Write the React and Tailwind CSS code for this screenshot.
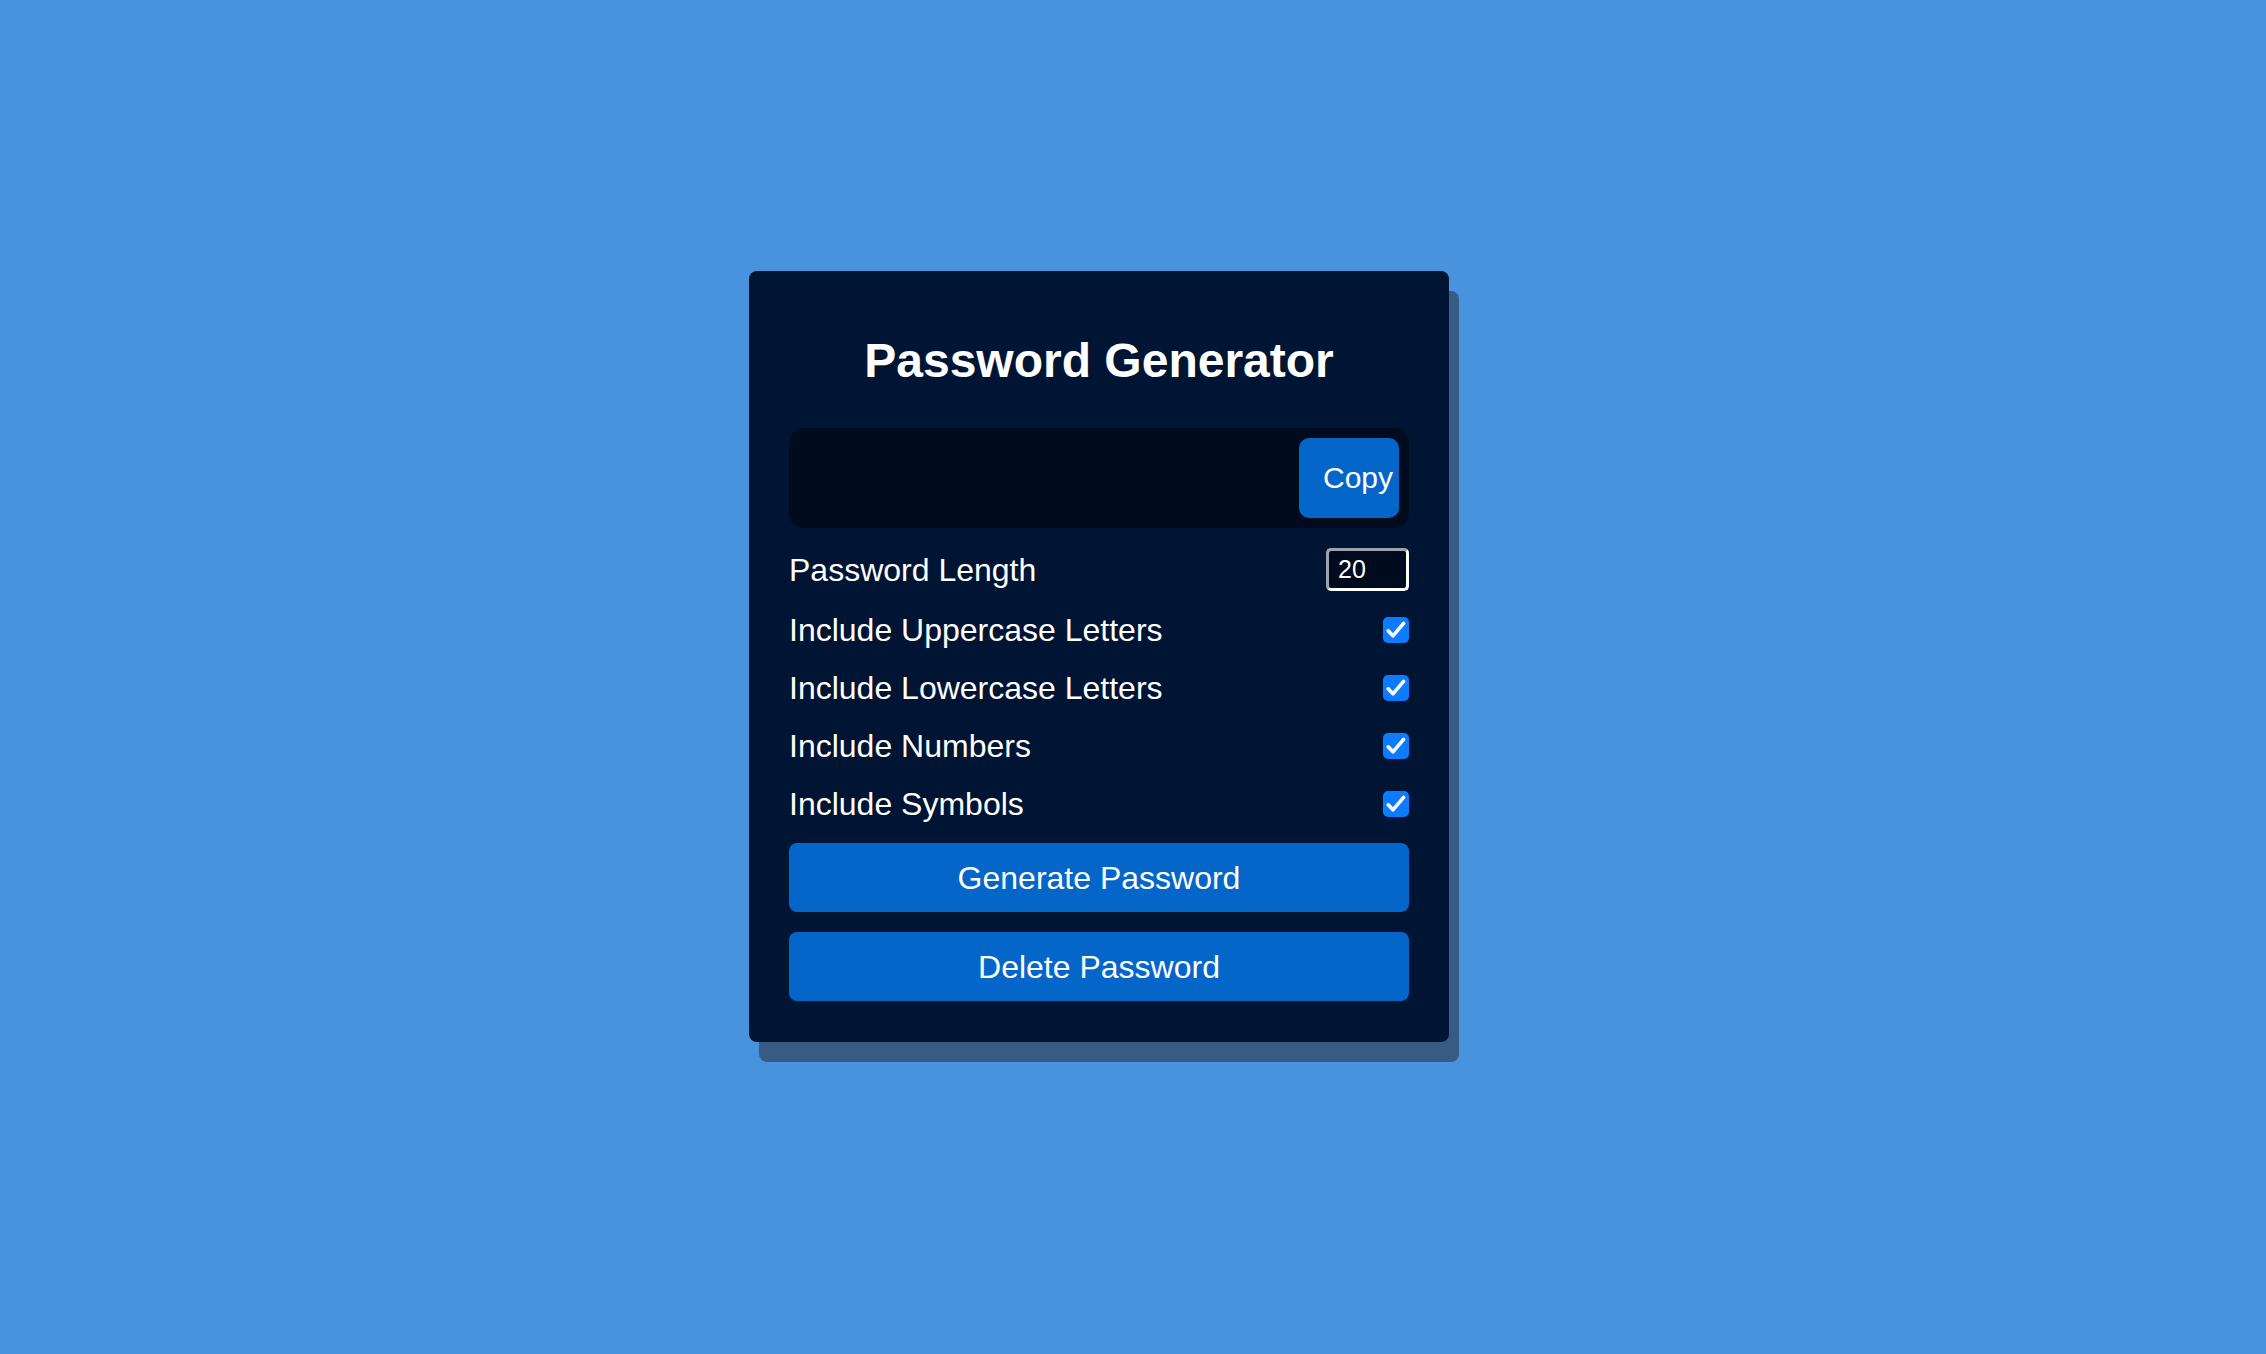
import React from "react";

function Check() {
  return (
    <div className="w-[26px] h-[26px] rounded-[5px] bg-[#0b7bff] flex items-center justify-center">
      <svg width="26" height="26" viewBox="0 0 26 26">
        <path d="M5.2 13.8 L10 18.8 L20.6 6.4" fill="none" stroke="white" strokeWidth="3.6" strokeLinecap="round" strokeLinejoin="round" />
      </svg>
    </div>
  );
}

function Row({ label }) {
  return (
    <div className="h-[38px] flex items-center justify-between">
      <span className="text-[32px] leading-[38px] text-white">{label}</span>
      <Check />
    </div>
  );
}

export default function App() {
  return (
    <div
      className="w-full h-[1354px] bg-[#4892de] pl-[749px] pt-[271px]"
      style={{ fontFamily: '"Liberation Sans", Arial, sans-serif' }}
    >
      <div className="w-[700px] rounded-[8px] bg-[#001433] shadow-[10px_20px_0_#385b84] px-10 pt-[62px] pb-[41px] flex flex-col">
        <h1 className="text-[48px] leading-[56px] font-bold text-white text-center">Password Generator</h1>
        <div className="mt-[39px] h-[100px] rounded-[15px] bg-[#000b1d] p-[10px] flex justify-end">
          <button className="w-[100px] h-[80px] rounded-[10px] bg-[#0466c8] text-white text-[30px] leading-[36px] text-left pl-[24px] whitespace-nowrap">
            Copy
          </button>
        </div>
        <div className="mt-5 flex flex-col gap-5">
          <div className="h-[43px] flex items-center justify-between">
            <span className="text-[32px] leading-[38px] text-white">Password Length</span>
            <input
              readOnly
              value="20"
              className="w-[83px] h-[43px] rounded-[5px] border-[3px] border-t-[#9ca3af] border-l-[#9ca3af] border-r-white border-b-white bg-[#000b1d] text-white text-[25px] pl-[9px] outline-none"
              style={{ fontFamily: '"Liberation Sans", Arial, sans-serif' }}
            />
          </div>
          <Row label="Include Uppercase Letters" />
          <Row label="Include Lowercase Letters" />
          <Row label="Include Numbers" />
          <Row label="Include Symbols" />
          <button className="h-[69px] rounded-[8px] bg-[#0466c8] text-white text-[32px] leading-[38px]">
            Generate Password
          </button>
          <button className="h-[69px] rounded-[8px] bg-[#0466c8] text-white text-[32px] leading-[38px]">
            Delete Password
          </button>
        </div>
      </div>
    </div>
  );
}
